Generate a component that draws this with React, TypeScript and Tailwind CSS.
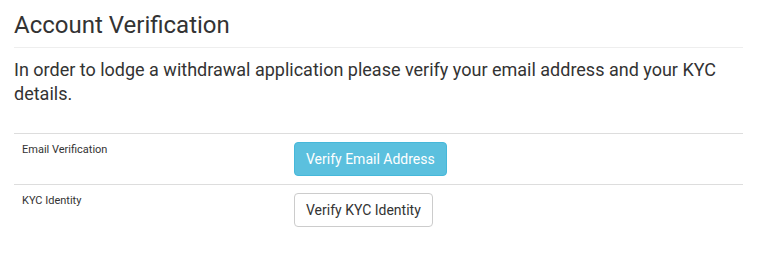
export default function App() {
  return (
    <div className="bg-white min-h-[272px] text-[#333]" style={{ fontFamily: 'Roboto, "Helvetica Neue", Arial, sans-serif' }}>
      <div className="ml-[14px] w-[729px] pt-[12px]">
        <div className="border-b border-[#eee] pb-[9px]">
          <h1 className="text-[24px] leading-[26px] font-normal">Account Verification</h1>
        </div>
        <p className="mt-[10px] text-[18px] leading-[24px]">
          In order to lodge a withdrawal application please verify your email address and your KYC details.
        </p>
        <table className="mt-[27px] w-full border-collapse">
          <tbody>
            <tr className="border-t border-[#ddd]">
              <td className="w-[272px] p-2 align-top text-[11px] leading-[16px]">Email Verification</td>
              <td className="p-2 align-top">
                <button className="h-[34px] rounded-[4px] border border-[#46b8da] bg-[#5bc0de] px-[11px] text-[14px] text-white">
                  Verify Email Address
                </button>
              </td>
            </tr>
            <tr className="border-t border-[#ddd]">
              <td className="w-[272px] p-2 align-top text-[11px] leading-[16px]">KYC Identity</td>
              <td className="p-2 align-top">
                <button className="h-[34px] rounded-[4px] border border-[#ccc] bg-white px-[11px] text-[14px] text-[#333]">
                  Verify KYC Identity
                </button>
              </td>
            </tr>
          </tbody>
        </table>
      </div>
    </div>
  );
}
